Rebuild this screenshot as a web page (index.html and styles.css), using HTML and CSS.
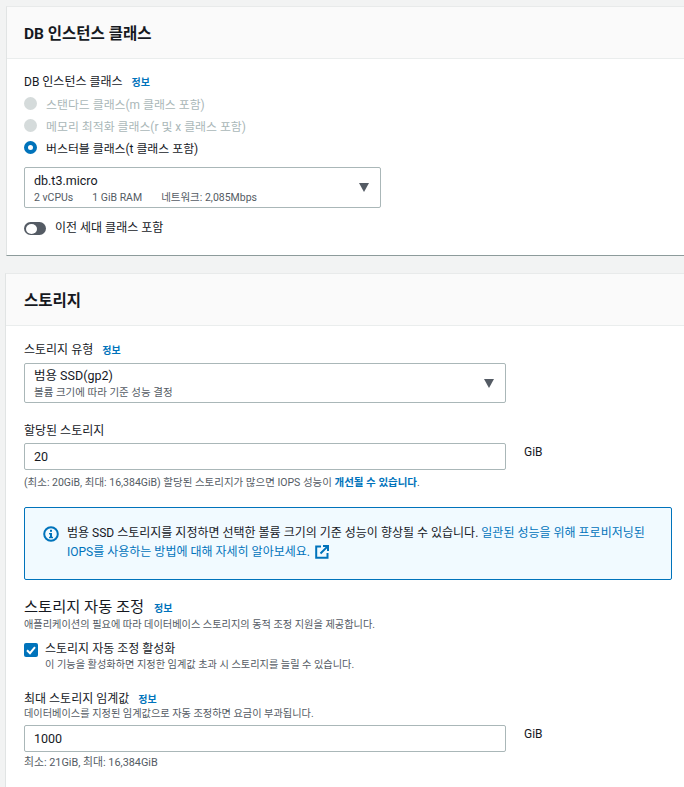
FILE: index.html
```html
<!DOCTYPE html>
<html lang="ko">
<head>
    <meta charset="UTF-8">
    <meta name="viewport" content="width=device-width, initial-scale=1.0">
    <title>DB 인스턴스 클래스</title>
    <link rel="stylesheet" href="styles.css">
</head>
<body>

<div class="panel panel-class">
    <div class="panel-header"><h2>DB 인스턴스 클래스</h2></div>
    <div class="panel-body">
        <div class="label">DB 인스턴스 클래스 <a class="info">정보</a></div>

        <div class="radio-list">
            <div class="radio-row disabled"><span class="radio"></span>스탠다드 클래스(m 클래스 포함)</div>
            <div class="radio-row disabled"><span class="radio"></span>메모리 최적화 클래스(r 및 x 클래스 포함)</div>
            <div class="radio-row"><span class="radio checked"></span>버스터블 클래스(t 클래스 포함)</div>
        </div>

        <div class="select select-short">
            <div>
                <div class="select-value">db.t3.micro</div>
                <div class="select-desc">
                    <span>2 vCPUs</span>
                    <span>1 GiB RAM</span>
                    <span>네트워크: 2,085Mbps</span>
                </div>
            </div>
            <span class="caret"></span>
        </div>

        <div class="toggle-row">
            <span class="toggle"><span class="toggle-knob"></span></span>
            이전 세대 클래스 포함
        </div>
    </div>
</div>

<div class="panel panel-storage">
    <div class="panel-header"><h2>스토리지</h2></div>
    <div class="panel-body">
        <div class="label">스토리지 유형 <a class="info">정보</a></div>
        <div class="select select-long">
            <div>
                <div class="select-value">범용 SSD(gp2)</div>
                <div class="select-desc">볼륨 크기에 따라 기준 성능 결정</div>
            </div>
            <span class="caret"></span>
        </div>

        <div class="label label-gap">할당된 스토리지</div>
        <div class="input-row input-row-first">
            <div class="input">20</div>
            <span class="unit">GiB</span>
        </div>
        <div class="hint">(최소: 20GiB, 최대: 16,384GiB) 할당된 스토리지가 많으면 IOPS 성능이 <a class="link-bold">개선될 수 있습니다</a>.</div>

        <div class="alert">
            <svg class="alert-icon" width="16" height="16" viewBox="0 0 16 16">
                <circle cx="8" cy="8" r="6.8" fill="none" stroke="#0073bb" stroke-width="2"/>
                <rect x="7" y="7" width="2" height="5" fill="#0073bb"/>
                <rect x="6" y="7" width="3" height="1.4" fill="#0073bb"/>
                <rect x="6" y="10.8" width="4" height="1.4" fill="#0073bb"/>
                <rect x="7" y="3.8" width="2" height="2" fill="#0073bb"/>
            </svg>
            <p>범용 SSD 스토리지를 지정하면 선택한 볼륨 크기의 기준 성능이 향상될 수 있습니다. <a class="link">일관된 성능을 위해 프로비저닝된</a> <a class="link">IOPS를 사용하는 방법에 대해 자세히 알아보세요.</a>
                <svg class="external" width="14" height="14" viewBox="0 0 14 14">
                    <path d="M6 1.5H1.2v11.3h11.3V8" fill="none" stroke="#0073bb" stroke-width="2"/>
                    <path d="M8 1h5v5M12.6 1.4L5.5 8.5" fill="none" stroke="#0073bb" stroke-width="2"/>
                </svg>
            </p>
        </div>

        <div class="sub-title">스토리지 자동 조정 <a class="info">정보</a></div>
        <div class="desc">애플리케이션의 필요에 따라 데이터베이스 스토리지의 동적 조정 지원을 제공합니다.</div>

        <div class="check-row">
            <svg class="checkbox" width="14" height="14" viewBox="0 0 14 14">
                <rect width="14" height="14" rx="2" fill="#0073bb"/>
                <path d="M3 7.2l3 3 5-6" fill="none" stroke="#fff" stroke-width="2"/>
            </svg>
            <div>
                <div class="check-label">스토리지 자동 조정 활성화</div>
                <div class="desc">이 기능을 활성화하면 지정한 임계값 초과 시 스토리지를 늘릴 수 있습니다.</div>
            </div>
        </div>

        <div class="label label-max">최대 스토리지 임계값 <a class="info">정보</a></div>
        <div class="desc">데이터베이스를 지정된 임계값으로 자동 조정하면 요금이 부과됩니다.</div>
        <div class="input-row input-row-max">
            <div class="input">1000</div>
            <span class="unit">GiB</span>
        </div>
        <div class="hint hint-grey">최소: 21GiB, 최대: 16,384GiB</div>
    </div>
</div>

</body>
</html>
```

FILE: styles.css
```css
html, body {
    overflow: hidden;
}
body {
    font-family: "Roboto", "Noto Sans CJK KR", sans-serif;
    background-color: #f2f3f3;
    margin: 0;
    padding: 6px 0 0 6px;
    color: #16191f;
    font-size: 12px;
}
.panel {
    background-color: #fff;
    border-top: 1px solid #e8eaea;
    border-left: 1px solid #e1e4e4;
}
.panel-class {
    height: 250px;
    border-bottom: 1px solid #8d9b9b;
    box-sizing: border-box;
}
.panel-storage {
    margin-top: 17px;
    margin-left: -1px;
    height: 520px;
}
.panel-header {
    height: 49px;
    display: flex;
    align-items: center;
    padding: 0 0 2px 17px;
    background-color: #fafafa;
    border-bottom: 1px solid #eaeded;
}
.panel-storage .panel-header {
    padding-left: 18px;
}
.panel-header h2 {
    margin: 0;
    font-size: 15.5px;
    font-weight: 700;
}
.panel-class .panel-body {
    padding: 15px 0 0 17px;
}
.panel-storage .panel-body {
    padding: 16px 12px 0 18px;
}
.label {
    line-height: 17px;
    font-size: 12px;
}
.label-gap {
    margin-top: 20px;
}
.label-max {
    margin-top: 20px;
    line-height: 15px;
}
.info {
    color: #0073bb;
    font-size: 10px;
    font-weight: 700;
    margin-left: 6px;
}
.radio-list {
    margin-top: 1px;
}
.radio-row {
    display: flex;
    align-items: center;
    gap: 9px;
    height: 22px;
    font-size: 11.9px;
}
.radio-row.disabled {
    color: #aab7b8;
}
.radio {
    width: 13px;
    height: 13px;
    border-radius: 50%;
    background-color: #d5dbdb;
}
.radio.checked {
    width: 5px;
    height: 5px;
    background-color: #fff;
    border: 4px solid #0073bb;
}
.select {
    display: flex;
    justify-content: space-between;
    align-items: center;
    box-sizing: border-box;
    border: 1px solid #aab7b8;
    border-radius: 2px;
    padding: 2px 11px 0 9px;
}
.select-short {
    width: 357px;
    height: 41px;
    margin-top: 9px;
}
.select-long {
    width: 482px;
    height: 40px;
    margin-top: 4px;
}
.select-value {
    font-size: 12.5px;
    line-height: 16px;
}
.select-desc {
    font-size: 10.5px;
    line-height: 15px;
    margin-top: 1px;
    color: #545b64;
    display: flex;
    gap: 19px;
}
.caret {
    width: 0;
    height: 0;
    margin-top: -2px;
    border-left: 5.5px solid transparent;
    border-right: 5.5px solid transparent;
    border-top: 9px solid #545b64;
}
.toggle-row {
    display: flex;
    align-items: center;
    gap: 9px;
    margin-top: 12px;
    line-height: 17px;
}
.toggle {
    display: flex;
    align-items: center;
    box-sizing: border-box;
    width: 22px;
    height: 13px;
    padding: 0 2px;
    border-radius: 7px;
    background-color: #545b64;
}
.toggle-knob {
    width: 11px;
    height: 10px;
    border-radius: 50%;
    background-color: #fff;
}
.input-row {
    display: flex;
}
.input-row-first {
    margin-top: 3px;
}
.input {
    width: 482px;
    height: 27px;
    line-height: 25px;
    box-sizing: border-box;
    border: 1px solid #aab7b8;
    border-radius: 2px;
    padding-left: 9px;
    font-size: 12.5px;
}
.unit {
    margin: 1px 0 0 18px;
    font-size: 12px;
    line-height: 17px;
}
.hint {
    margin-top: 5px;
    font-size: 10.5px;
    line-height: 15px;
    color: #545b64;
}
.link-bold {
    color: #0073bb;
    font-weight: 700;
}
.alert {
    display: flex;
    gap: 8px;
    box-sizing: border-box;
    height: 73px;
    width: 648px;
    margin-top: 17px;
    padding: 16px 18px 0 18px;
    background-color: #f1faff;
    border: 1px solid #0073bb;
    border-radius: 2px;
}
.alert-icon {
    flex: none;
    margin-top: 2px;
}
.alert p {
    margin: 0;
    line-height: 19px;
}
.link {
    color: #0073bb;
}
.external {
    vertical-align: -3px;
    margin-left: 2px;
}
.sub-title {
    margin-top: 18px;
    font-size: 15.3px;
    line-height: 18px;
}
.desc {
    font-size: 10.2px;
    line-height: 14px;
    color: #545b64;
}
.check-row {
    display: flex;
    gap: 7px;
    margin-top: 9px;
}
.checkbox {
    flex: none;
    margin-top: 2px;
}
.check-label {
    line-height: 17px;
}
.input-row-max {
    margin-top: 4px;
}
.hint-grey {
    margin-top: 3px;
    font-size: 10.85px;
}
```
